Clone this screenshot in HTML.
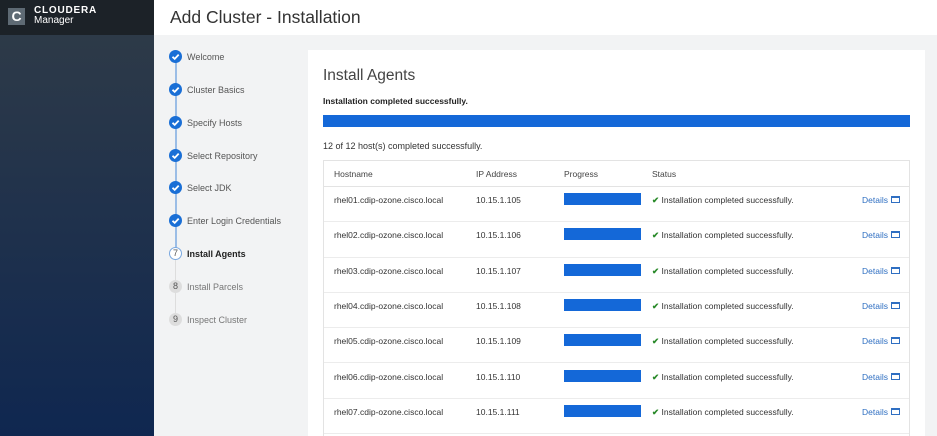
<!DOCTYPE html>
<html><head><meta charset="utf-8"><style>
*{margin:0;padding:0;box-sizing:border-box}
html,body{width:937px;height:436px;overflow:hidden}
body{background:#f2f3f4;font-family:"Liberation Sans",sans-serif;position:relative}
.side{position:absolute;left:0;top:0;width:154px;height:436px;background:linear-gradient(#2d3a48 35px,#27364a 120px,#0f2750 436px)}
.logo{position:absolute;left:0;top:0;width:154px;height:35px;background:#1c2228}
.lg{position:absolute;left:8px;top:8px;width:17px;height:17px;background:#5e6a74;color:#fff;font-weight:bold;font-size:14px;text-align:center;line-height:17px}
.lt{position:absolute;left:34px;top:6px;color:#fff;font-size:10px;line-height:10px}
.lt b{letter-spacing:0.8px;font-size:10px}
.head{position:absolute;left:154px;top:0;right:0;height:35px;background:#fff}
.head h1{position:absolute;left:16px;top:7px;font-weight:normal;font-size:17.5px;color:#333}
.step{position:absolute;left:169px;font-size:9px;color:#555;height:14px;line-height:14px}
.step span{position:absolute;left:18px;white-space:nowrap}
.ic{position:absolute;left:0;top:0;width:13px;height:13px;border-radius:50%;background:#1a6fd6}
.vline{position:absolute;left:175px;top:60px;width:1.5px;height:193px;background:#9bbde6}
.vline2{position:absolute;left:175px;top:260px;width:1px;height:60px;background:#ddd}
.card{position:absolute;left:308px;top:50px;width:617px;height:386px;background:#fff;overflow:hidden}
.card h2{position:absolute;left:15px;top:17px;font-weight:normal;font-size:15.5px;color:#444}
.ok{position:absolute;left:15px;top:46px;font-size:8.5px;font-weight:bold;color:#222}
.bar{position:absolute;left:15px;top:65px;width:587px;height:12px;background:#1468d8}
.cnt{position:absolute;left:15px;top:91px;font-size:9px;color:#333}
.tbl{position:absolute;left:15px;top:110px;width:587px;height:276px;border:1px solid #e3e3e3;border-bottom:none;overflow:hidden}
.th{position:absolute;top:0;left:0;right:0;height:26px;border-bottom:1px solid #e3e3e3;font-size:8.5px;color:#444}
.th span,.row span{position:absolute;top:8px}
.row{position:absolute;left:0;right:0;height:35.3px;border-bottom:1px solid #ececec;font-size:8.5px;color:#333}
.pb{position:absolute;left:240px;top:6px;width:77px;height:12px;background:#1468d8}
.det{color:#2f6fc2}
.win{position:absolute;left:567px;top:9px;width:9px;height:7px;border:1.5px solid #2f6fc2;border-top-width:2.5px}
</style></head><body>
<div class="side"></div>
<div class="logo"><div class="lg">C</div><div class="lt"><b>CLOUDERA</b><br>Manager</div></div>
<div class="head"><h1>Add Cluster - Installation</h1></div>
<div class="vline"></div><div class="vline2"></div>
<div class="step" style="top:50px"><div class="ic"><svg width="13" height="13"><path d="M3.5 6.8l2.2 2.1 4-4.3" stroke="#fff" stroke-width="1.8" fill="none"/></svg></div><span>Welcome</span></div>
<div class="step" style="top:83px"><div class="ic"><svg width="13" height="13"><path d="M3.5 6.8l2.2 2.1 4-4.3" stroke="#fff" stroke-width="1.8" fill="none"/></svg></div><span>Cluster Basics</span></div>
<div class="step" style="top:116px"><div class="ic"><svg width="13" height="13"><path d="M3.5 6.8l2.2 2.1 4-4.3" stroke="#fff" stroke-width="1.8" fill="none"/></svg></div><span>Specify Hosts</span></div>
<div class="step" style="top:149px"><div class="ic"><svg width="13" height="13"><path d="M3.5 6.8l2.2 2.1 4-4.3" stroke="#fff" stroke-width="1.8" fill="none"/></svg></div><span>Select Repository</span></div>
<div class="step" style="top:181px"><div class="ic"><svg width="13" height="13"><path d="M3.5 6.8l2.2 2.1 4-4.3" stroke="#fff" stroke-width="1.8" fill="none"/></svg></div><span>Select JDK</span></div>
<div class="step" style="top:214px"><div class="ic"><svg width="13" height="13"><path d="M3.5 6.8l2.2 2.1 4-4.3" stroke="#fff" stroke-width="1.8" fill="none"/></svg></div><span>Enter Login Credentials</span></div>
<div class="step" style="top:247px;color:#222;font-weight:bold"><div class="ic" style="background:#fff;border:1px solid #7aa8e0;color:#555;font-weight:normal;font-size:9px;text-align:center;line-height:11px">7</div><span>Install Agents</span></div>
<div class="step" style="top:280px;color:#777"><div class="ic" style="background:#ddd;color:#555;font-size:9px;text-align:center;line-height:13px">8</div><span>Install Parcels</span></div>
<div class="step" style="top:313px;color:#777"><div class="ic" style="background:#ddd;color:#555;font-size:9px;text-align:center;line-height:13px">9</div><span>Inspect Cluster</span></div>
<div class="card">
<h2>Install Agents</h2>
<div class="ok">Installation completed successfully.</div>
<div class="bar"></div>
<div class="cnt">12 of 12 host(s) completed successfully.</div>
<div class="tbl">
<div class="th"><span style="left:10px">Hostname</span><span style="left:152px">IP Address</span><span style="left:240px">Progress</span><span style="left:328px">Status</span></div>
<div class="row" style="top:26px"><span style="left:10px">rhel01.cdip-ozone.cisco.local</span><span style="left:152px">10.15.1.105</span><div class="pb"></div><span style="left:328px"><b style="color:#2a8a2a">✔</b> Installation completed successfully.</span><span class="det" style="left:538px">Details</span><div class="win"></div></div>
<div class="row" style="top:61.3px"><span style="left:10px">rhel02.cdip-ozone.cisco.local</span><span style="left:152px">10.15.1.106</span><div class="pb"></div><span style="left:328px"><b style="color:#2a8a2a">✔</b> Installation completed successfully.</span><span class="det" style="left:538px">Details</span><div class="win"></div></div>
<div class="row" style="top:96.6px"><span style="left:10px">rhel03.cdip-ozone.cisco.local</span><span style="left:152px">10.15.1.107</span><div class="pb"></div><span style="left:328px"><b style="color:#2a8a2a">✔</b> Installation completed successfully.</span><span class="det" style="left:538px">Details</span><div class="win"></div></div>
<div class="row" style="top:131.9px"><span style="left:10px">rhel04.cdip-ozone.cisco.local</span><span style="left:152px">10.15.1.108</span><div class="pb"></div><span style="left:328px"><b style="color:#2a8a2a">✔</b> Installation completed successfully.</span><span class="det" style="left:538px">Details</span><div class="win"></div></div>
<div class="row" style="top:167.2px"><span style="left:10px">rhel05.cdip-ozone.cisco.local</span><span style="left:152px">10.15.1.109</span><div class="pb"></div><span style="left:328px"><b style="color:#2a8a2a">✔</b> Installation completed successfully.</span><span class="det" style="left:538px">Details</span><div class="win"></div></div>
<div class="row" style="top:202.5px"><span style="left:10px">rhel06.cdip-ozone.cisco.local</span><span style="left:152px">10.15.1.110</span><div class="pb"></div><span style="left:328px"><b style="color:#2a8a2a">✔</b> Installation completed successfully.</span><span class="det" style="left:538px">Details</span><div class="win"></div></div>
<div class="row" style="top:237.8px"><span style="left:10px">rhel07.cdip-ozone.cisco.local</span><span style="left:152px">10.15.1.111</span><div class="pb"></div><span style="left:328px"><b style="color:#2a8a2a">✔</b> Installation completed successfully.</span><span class="det" style="left:538px">Details</span><div class="win"></div></div>
</div>
</div>
</body></html>
